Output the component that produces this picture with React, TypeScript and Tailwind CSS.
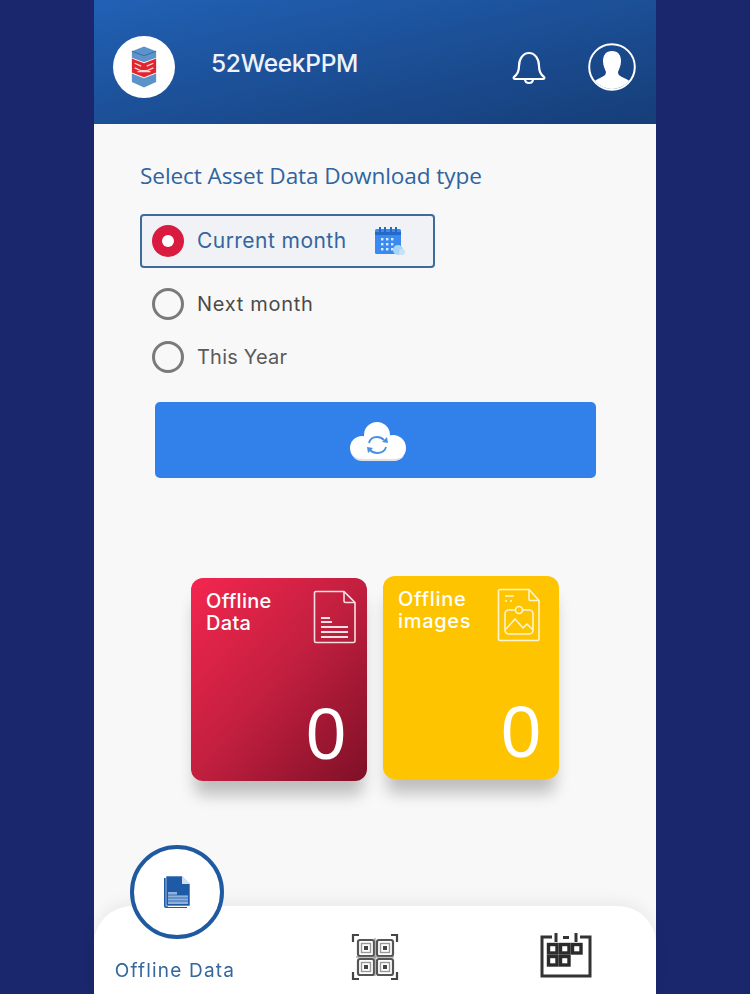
import React from "react";

const poppins = "font-['Inter','Liberation_Sans',sans-serif]";

function Logo() {
  return (
    <svg width="28" height="44" viewBox="0 0 30 46">
      <path d="M15 1 28 6v7L15 18 2 13V6z" fill="#5c93c9" />
      <path d="M2 6l13 5 13-5" fill="none" stroke="#2f6aa8" strokeWidth="1" />
      <path d="M2 14l13 5 13-5v15l-13 5-13-5z" fill="#e3262e" />
      <path d="M5 19l7 3M25 19l-7 3M5 24l7 3h6l7-3M8 28h14" stroke="#f8d7d7" strokeWidth="1.4" fill="none" />
      <path d="M2 30l13 5 13-5v9l-13 6-13-6z" fill="#5c93c9" />
    </svg>
  );
}

function Bell() {
  return (
    <svg width="36" height="38" viewBox="0 0 36 38" fill="none" stroke="#fff" strokeWidth="2.2" strokeLinejoin="round">
      <path d="M3 29c4-3 5-6 5-11 0-7 4-13 10-13s10 6 10 13c0 5 1 8 5 11 1 1 0 2-1 2H4c-1 0-2-1-1-2z" />
      <path d="M14 31c0 3 2 4 4 4s4-1 4-4" />
    </svg>
  );
}

function Avatar() {
  return (
    <svg width="48" height="48" viewBox="0 0 48 48">
      <defs>
        <clipPath id="av">
          <circle cx="24" cy="24" r="22" />
        </clipPath>
      </defs>
      <g clipPath="url(#av)" fill="#fff">
        <path d="M24 8c6 0 9 4 9 10 0 5-2 8-3 11 0 3 2 4 6 6 5 2 8 4 8 13H4c0-9 3-11 8-13 4-2 6-3 6-6-1-3-3-6-3-11 0-6 3-10 9-10z" />
      </g>
      <circle cx="24" cy="24" r="22.8" fill="none" stroke="#fff" strokeWidth="2" />
    </svg>
  );
}

function CalIcon() {
  return (
    <svg width="34" height="32" viewBox="0 0 34 32">
      <rect x="3" y="4" width="26" height="25" rx="1.5" fill="#3b8af0" />
      <path d="M8 2v5M13 2v5M19 2v5M24 2v5" stroke="#2468c8" strokeWidth="2" />
      <rect x="3" y="7" width="26" height="3" fill="#2468c8" />
      {[9, 14, 19].map((x) =>
        [13, 18, 23].map((y) => <rect key={`${x}-${y}`} x={x} y={y} width="2.4" height="2.4" fill="#dbeafe" />)
      )}
      <circle cx="26" cy="25" r="5" fill="#a9d4f5" />
      <circle cx="30" cy="27" r="3" fill="#c4e2f8" />
    </svg>
  );
}

function Cloud() {
  return (
    <svg width="58" height="42" viewBox="0 0 58 42">
      <g fill="#fff">
        <circle cx="28" cy="14" r="13" />
        <circle cx="13" cy="27" r="12" />
        <circle cx="44" cy="27" r="13" />
        <rect x="13" y="20" width="31" height="20" />
      </g>
      <path d="M2 32c2 5 6 8 11 8h31c4 0 9-2 11-5-3 2-6 3-11 3H14c-5 0-9-2-12-6z" fill="#dfe3e8" />
      <g fill="none" stroke="#4a8fe0" strokeWidth="1.8">
        <path d="M20 22c1-4 4-6 8-6 3 0 5 1 7 3" />
        <path d="M37 26c-1 4-5 6-9 6-3 0-5-1-7-3" />
      </g>
      <path d="M33 21l6 1-1-6zM24 27l-6-1 1 6z" fill="#4a8fe0" />
    </svg>
  );
}

function DocIcon() {
  return (
    <svg width="44" height="54" viewBox="0 0 44 54" fill="none" stroke="#f6dfe3" strokeWidth="1.6" strokeLinejoin="round">
      <path d="M3 1.5h28l11 11V51a1.5 1.5 0 0 1-1.5 1.5H3A1.5 1.5 0 0 1 1.5 51V3A1.5 1.5 0 0 1 3 1.5z" />
      <path d="M31 1.5V11a1.5 1.5 0 0 0 1.5 1.5H42" />
      <path d="M8 28h9M8 32h11M8 37h27M8 42h27M8 47h27" strokeWidth="1.8" />
    </svg>
  );
}

function ImgDocIcon() {
  return (
    <svg width="44" height="54" viewBox="0 0 44 54" fill="none" stroke="#fff6cf" strokeWidth="1.6" strokeLinejoin="round">
      <path d="M3 1.5h29l10 11V51a1.5 1.5 0 0 1-1.5 1.5H3A1.5 1.5 0 0 1 1.5 51V3A1.5 1.5 0 0 1 3 1.5z" />
      <path d="M32 1.5V11a1.5 1.5 0 0 0 1.5 1.5H42" />
      <path d="M8 8h9M8 13h2M13 13h2" />
      <path d="M8 42V26a4 4 0 0 1 4-4h20a4 4 0 0 1 4 4v16a4 4 0 0 1-4 4H12a4 4 0 0 1-4-4z" />
      <circle cx="22" cy="22" r="3.5" fill="#ffc400" />
      <path d="M9 41l9-10 8 9 4-4 6 6" />
    </svg>
  );
}

function SmallDoc() {
  return (
    <svg width="28" height="34" viewBox="0 0 28 34">
      <path d="M1 3h4v29h19v1H3a2 2 0 0 1-2-2z" fill="#1f5aa6" />
      <path d="M3 1h16l8 8v22H3z" fill="#1f5aa6" stroke="#fff" strokeWidth="0.6" />
      <path d="M19 1v8h8z" fill="#cfe0f3" />
      <path d="M5 17h9v3h11v9H5z" fill="#8fb2dc" />
      <path d="M5 20h20M5 23h20M5 26h20" stroke="#1f5aa6" strokeWidth="0.8" />
    </svg>
  );
}

function Qr() {
  const cell = (x: number, y: number) => (
    <g key={`${x}${y}`}>
      <rect x={x} y={y} width="16" height="16" rx="2" fill="none" stroke="#555" strokeWidth="2.2" />
      <rect x={x + 3.5} y={y + 3.5} width="9" height="9" fill="none" stroke="#999" strokeWidth="1.4" />
      <rect x={x + 6} y={y + 6} width="4" height="4" fill="#444" />
    </g>
  );
  return (
    <svg width="48" height="48" viewBox="0 0 48 48">
      <path d="M8 2H2v7M40 2h6v7M2 39v7h6M46 39v7h-6" fill="none" stroke="#444" strokeWidth="2.2" />
      {cell(7, 7)}
      {cell(26, 7)}
      {cell(7, 26)}
      {cell(26, 26)}
      <path d="M5 24h38M24 5v38" stroke="#777" strokeWidth="0.9" />
    </svg>
  );
}

function BigCal() {
  const c = [
    [8.5, 12.5],
    [20.5, 12.5],
    [32.5, 12.5],
    [8.5, 24.5],
    [20.5, 24.5],
  ];
  return (
    <svg width="52" height="46" viewBox="0 0 52 46">
      <path d="M12 5H2v39h48V5H40" fill="none" stroke="#333" strokeWidth="3" />
      <path d="M16 1v9M36 1v9M23 5.5h6" stroke="#333" strokeWidth="3" />
      {c.map(([x, y]) => (
        <rect key={`${x}${y}`} x={x} y={y} width="8.5" height="8.5" fill="#fff" stroke="#2b2b2b" strokeWidth="3.4" />
      ))}
    </svg>
  );
}

function Radio({ on }: { on?: boolean }) {
  return on ? (
    <span className="block h-8 w-8 rounded-full bg-[#d81b3f] p-[10px]">
      <span className="block h-full w-full rounded-full bg-white" />
    </span>
  ) : (
    <span className="block h-8 w-8 rounded-full border-[3px] border-[#7a7a7a] bg-transparent" />
  );
}

function Card({
  title,
  sub,
  icon,
  className,
  iconClass,
  numClass,
  textClass,
}: {
  title: string;
  sub: string;
  icon: React.ReactNode;
  className: string;
  iconClass: string;
  numClass: string;
  textClass: string;
}) {
  return (
    <div className={`flex h-[203px] w-[176px] flex-col justify-between rounded-xl pb-[11px] pl-[15px] pr-[21px] pt-[12px] text-white shadow-[0_18px_16px_-4px_rgba(0,0,0,0.24)] ${className}`}>
      <div className="flex items-start justify-between">
        <div className={`${poppins} text-[20px] leading-[22px] font-medium ${textClass}`}>
          {title}
          <br />
          {sub}
        </div>
        <div className={iconClass}>{icon}</div>
      </div>
      <div className={`text-right font-['Liberation_Sans',sans-serif] text-[72px] leading-[72px] ${numClass}`}>0</div>
    </div>
  );
}

export default function App() {
  return (
    <div className="flex h-[994px] w-[750px] justify-center overflow-hidden bg-[#1a276c]">
      <div className="relative flex h-full w-[562px] flex-col bg-[#f8f8f8] blur-[0.4px]">
        <header className="flex h-[124px] items-center justify-between bg-gradient-to-br from-[#2161b5] to-[#163e78] pl-[19px] pr-[20px] pt-[10px]">
          <div className="flex items-center gap-[36px]">
            <div className="flex h-[62px] w-[62px] items-center justify-center rounded-full bg-white">
              <Logo />
            </div>
            <span className={`${poppins} mb-[8px] text-[24.5px] font-medium tracking-[-0.3px] text-[#eef3fa]`}>52WeekPPM</span>
          </div>
          <div className="flex items-center gap-[41px]">
            <Bell />
            <Avatar />
          </div>
        </header>

        <main className="flex flex-1 flex-col pl-[46px]">
          <h2 className="mt-[37px] font-['Open_Sans',sans-serif] text-[22.6px] leading-[30px] tracking-[-0.1px] text-[#2f64a0]">
            Select Asset Data Download type
          </h2>
          <div className="mt-[23px] flex h-[54px] w-[295px] items-center rounded-[4px] border-2 border-[#3f6a9c] bg-[#f0f2f5] pl-[10px]">
            <Radio on />
            <span className={`${poppins} ml-[13px] w-[155px] text-[21px] tracking-[0.45px] text-[#34659f]`}>Current month</span>
            <span className="ml-[20px]">
              <CalIcon />
            </span>
          </div>
          <div className="ml-[12px] mt-[20px] flex items-center gap-[13px]">
            <Radio />
            <span className={`${poppins} text-[20px] tracking-[0.7px] text-[#4a4a4a]`}>Next month</span>
          </div>
          <div className="ml-[12px] mt-[21px] flex items-center gap-[13px]">
            <Radio />
            <span className={`${poppins} text-[20px] tracking-[0.2px] text-[#5a5a5a]`}>This Year</span>
          </div>
          <div className="ml-[15px] mt-[29px] flex h-[76px] w-[441px] items-center justify-center rounded-[5px] bg-[#3281ea] pl-[5px] pt-[4px]">
            <Cloud />
          </div>
          <div className="ml-[51px] mt-[100px] flex items-start gap-[16px]">
            <Card title="Offline" sub="Data" icon={<DocIcon />} iconClass="-mr-[11px]" numClass="" textClass="tracking-[0.3px]" className="bg-gradient-to-br from-[#f4264f] via-[#c21f3f] to-[#7f1027]" />
            <Card title="Offline" sub="images" icon={<ImgDocIcon />} iconClass="-mr-[3px]" numClass="-mr-[3px]" textClass="tracking-[0.7px]" className="-mt-[2px] bg-[#ffc400]" />
          </div>
        </main>

        <nav className="flex h-[88px] items-center rounded-t-[38px] bg-white shadow-[0_-6px_14px_rgba(0,0,0,0.05)]">
          <div className="flex w-[162px] justify-center pt-[42px]">
            <span className={`${poppins} text-[19px] tracking-[1.2px] text-[#35679f]`}>Offline Data</span>
          </div>
          <div className="ml-[95px] flex w-[48px] justify-center pt-[14px]">
            <Qr />
          </div>
          <div className="ml-[141px] flex w-[52px] justify-center pt-[10px]">
            <BigCal />
          </div>
        </nav>

        <div className="absolute left-[36px] top-[845px] flex h-[94px] w-[94px] items-center justify-center rounded-full border-[4px] border-[#1f5aa0] bg-white">
          <SmallDoc />
        </div>
      </div>
    </div>
  );
}
